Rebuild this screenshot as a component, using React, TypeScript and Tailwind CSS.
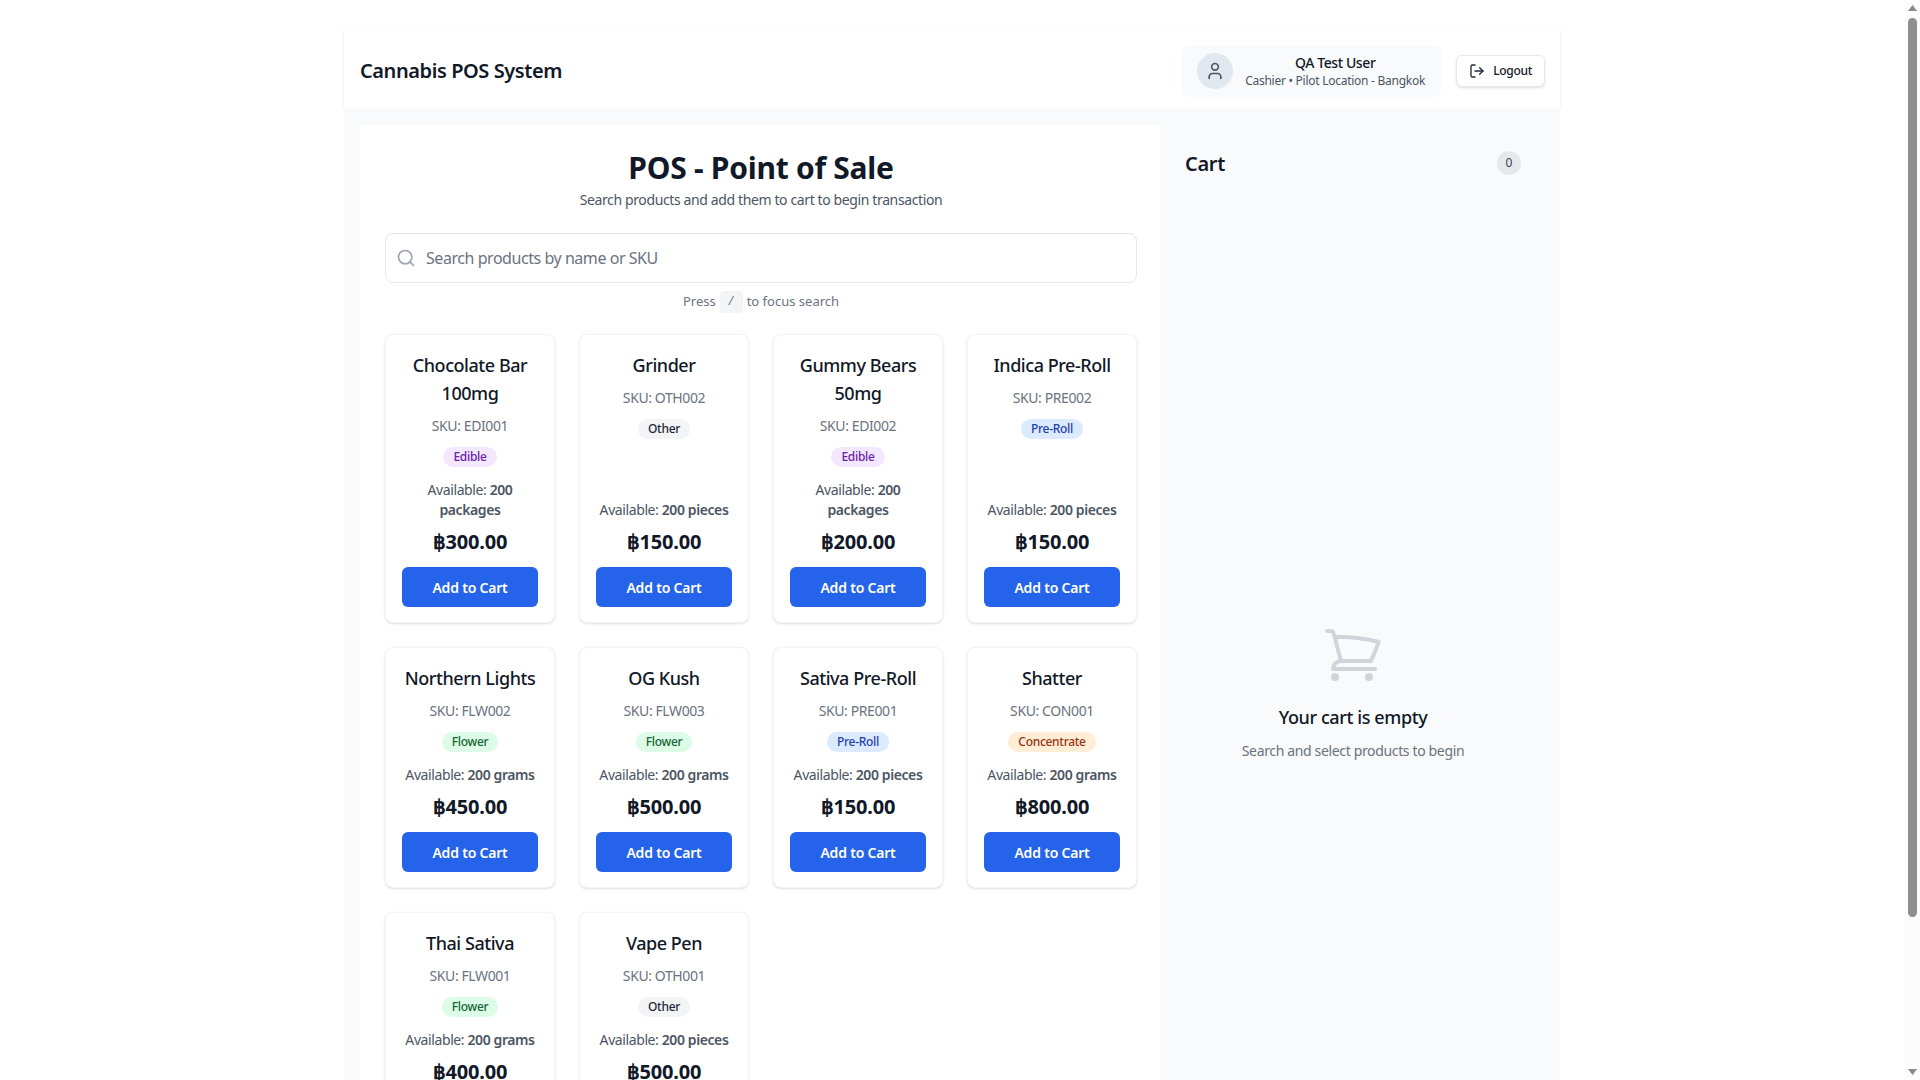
import { LogOut, Search, User } from "lucide-react";

const font = { fontFamily: '"Noto Sans", sans-serif' };

type P = { name: string; sku: string; cat: string; avail: string; price: string };

const products: P[] = [
  { name: "Chocolate Bar 100mg", sku: "EDI001", cat: "Edible", avail: "200 packages", price: "฿300.00" },
  { name: "Grinder", sku: "OTH002", cat: "Other", avail: "200 pieces", price: "฿150.00" },
  { name: "Gummy Bears 50mg", sku: "EDI002", cat: "Edible", avail: "200 packages", price: "฿200.00" },
  { name: "Indica Pre-Roll", sku: "PRE002", cat: "Pre-Roll", avail: "200 pieces", price: "฿150.00" },
  { name: "Northern Lights", sku: "FLW002", cat: "Flower", avail: "200 grams", price: "฿450.00" },
  { name: "OG Kush", sku: "FLW003", cat: "Flower", avail: "200 grams", price: "฿500.00" },
  { name: "Sativa Pre-Roll", sku: "PRE001", cat: "Pre-Roll", avail: "200 pieces", price: "฿150.00" },
  { name: "Shatter", sku: "CON001", cat: "Concentrate", avail: "200 grams", price: "฿800.00" },
  { name: "Thai Sativa", sku: "FLW001", cat: "Flower", avail: "200 grams", price: "฿400.00" },
  { name: "Vape Pen", sku: "OTH001", cat: "Other", avail: "200 pieces", price: "฿500.00" },
];

const badge: Record<string, string> = {
  Edible: "bg-[#f3e8ff] text-[#6b21a8]",
  Other: "bg-[#f3f4f6] text-[#1f2937]",
  "Pre-Roll": "bg-[#dbeafe] text-[#1e40af]",
  Flower: "bg-[#dcfce7] text-[#166534]",
  Concentrate: "bg-[#ffedd5] text-[#9a3412]",
};

function Card({ p }: { p: P }) {
  return (
    <div className="flex flex-col rounded-lg border border-[#f3f4f6] bg-white px-4 pt-4 pb-[15px] text-center shadow-sm">
      <div className="text-[18px] leading-7 font-medium tracking-[-0.45px] text-[#111827]">{p.name}</div>
      <div className="mt-[9px] text-sm leading-5 tracking-[-0.4px] text-[#6b7280]">SKU: {p.sku}</div>
      <div className="mt-[11px] flex justify-center">
        <span className={`rounded-full px-[10px] text-xs leading-5 font-medium tracking-[-0.3px] ${badge[p.cat]}`}>{p.cat}</span>
      </div>
      <div className="mt-auto pt-[13px] text-sm leading-5 tracking-[-0.4px] text-[#4b5563]">
        Available: <span className="font-semibold">{p.avail}</span>
      </div>
      <div className="mt-2 text-xl leading-7 font-bold tracking-[-0.15px] text-[#111827]">{p.price}</div>
      <button className="mt-[11px] h-10 rounded-md bg-[#2563eb] pt-px text-sm font-semibold tracking-[-0.2px] text-white">Add to Cart</button>
    </div>
  );
}

function ScrollBar() {
  return (
    <div className="fixed top-0 right-0 bottom-0 w-[15px] bg-[#fcfcfc]">
      <svg className="absolute top-[5px] left-[3px]" width="9" height="6" viewBox="0 0 9 6">
        <path d="M4.5 0 9 6H0Z" fill="#8a8a8a" />
      </svg>
      <div className="absolute top-[18px] left-[3px] h-[899px] w-[9px] rounded-full bg-[#8f8f8f]" />
      <svg className="absolute bottom-[5px] left-[3px]" width="9" height="6" viewBox="0 0 9 6">
        <path d="M0 0H9L4.5 6Z" fill="#8a8a8a" />
      </svg>
    </div>
  );
}

export default function App() {
  return (
    <div style={font} className="min-h-screen bg-white">
      <div className="w-[1904px]">
        <div className="mx-auto w-[1216px] pt-[30px]">
          <header className="flex h-[78px] items-center justify-between bg-white pt-[3px] pr-[15px] pl-4 shadow-sm">
            <h1 className="text-xl font-semibold tracking-[-0.42px] text-[#111827]">Cannabis POS System</h1>
            <div className="flex items-center gap-[15px]">
              <div className="flex items-center gap-3 rounded-lg bg-[#f9fafb] px-4 py-2">
                <div className="flex h-9 w-9 items-center justify-center rounded-full bg-[#e2e8f0]">
                  <User className="h-5 w-5 text-[#4b5563]" />
                </div>
                <div className="text-center">
                  <div className="text-sm leading-5 font-medium tracking-[-0.4px] text-[#111827]">QA Test User</div>
                  <div className="text-xs leading-4 tracking-[-0.26px] text-[#4b5563]">Cashier • Pilot Location - Bangkok</div>
                </div>
              </div>
              <button className="flex h-8 items-center gap-2 rounded-md border border-[#e5e7eb] bg-white px-3 text-xs font-medium tracking-[-0.3px] text-[#111827] shadow-sm">
                <LogOut className="h-4 w-4 text-[#1f2937]" />
                Logout
              </button>
            </div>
          </header>
          <div className="bg-[#f9fafb] pt-[17px] pl-4">
            <div className="flex items-stretch">
              <main className="w-[800px] bg-white pt-[25px] pr-[23px] pl-[25px]">
                <div className="text-center">
                  <h2 className="text-3xl font-bold tracking-[-0.26px] text-[#111827]">POS - Point of Sale</h2>
                  <p className="mt-1 text-sm tracking-[-0.38px] text-[#4b5563]">Search products and add them to cart to begin transaction</p>
                </div>
                <div className="mt-[23px] flex h-[50px] items-center gap-[10px] rounded-lg border border-[#e5e7eb] bg-white px-[10px]">
                  <Search className="h-5 w-5 text-[#9ca3af]" />
                  <span className="text-base tracking-[-0.45px] text-[#6b7280]">Search products by name or SKU</span>
                </div>
                <div className="mt-2 flex items-center justify-center gap-1 text-[13px] text-[#6b7280]">
                  <span>Press</span>
                  <kbd className="flex h-[22px] w-[23px] items-center justify-center rounded bg-[#f3f4f6] text-xs">/</kbd>
                  <span>to focus search</span>
                </div>
                <div className="mt-[21px] grid grid-cols-4 gap-6">
                  {products.map((p) => (
                    <Card key={p.sku} p={p} />
                  ))}
                </div>
                <div className="h-8" />
              </main>
              <aside className="w-[400px] py-6 pr-[39px] pl-[25px]">
                <div className="flex items-start justify-between">
                  <h3 className="mt-px text-xl font-semibold tracking-[-0.3px] text-[#111827]">Cart</h3>
                  <span className="mt-[2px] flex h-6 w-6 items-center justify-center rounded-full bg-[#e5e7eb] text-xs text-[#374151]">0</span>
                </div>
                <div className="mt-[445px] flex flex-col items-center text-center">
                  <svg className="h-16 w-16 text-[#d1d5db]" fill="none" viewBox="0 0 24 24" strokeWidth={1.5} stroke="currentColor">
                    <path strokeLinecap="round" strokeLinejoin="round" d="M2.25 3h1.386c.51 0 .955.343 1.087.835l.383 1.437M7.5 14.25a3 3 0 0 0-3 3h15.75m-12.75-3h11.218c1.121-2.3 2.1-4.684 2.924-7.138a60.114 60.114 0 0 0-16.536-1.84M7.5 14.25 5.106 5.272M6 20.25a.75.75 0 1 1-1.5 0 .75.75 0 0 1 1.5 0Zm12.75 0a.75.75 0 1 1-1.5 0 .75.75 0 0 1 1.5 0Z" />
                  </svg>
                  <div className="mt-4 text-[18px] leading-7 font-medium tracking-[-0.4px] text-[#111827]">Your cart is empty</div>
                  <div className="mt-[10px] text-sm leading-5 tracking-[-0.35px] text-[#6b7280]">Search and select products to begin</div>
                </div>
              </aside>
            </div>
          </div>
        </div>
      </div>
      <ScrollBar />
    </div>
  );
}
